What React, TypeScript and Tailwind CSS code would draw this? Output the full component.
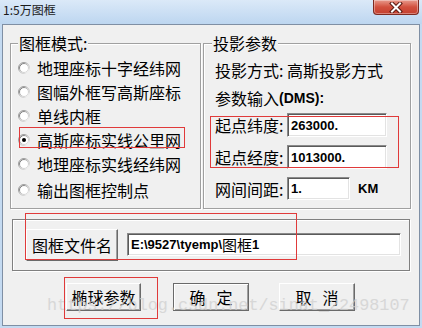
import React from "react";

const CJK = { fontFamily: '"Noto Sans CJK SC", "Noto Sans", sans-serif' };
const BOLD = { fontFamily: '"Liberation Sans", Arial, "Noto Sans CJK SC", sans-serif' };

function Radio({ checked }: { checked?: boolean }) {
  return (
    <svg width="12" height="12" viewBox="0 0 12 12" className="shrink-0">
      <defs>
        <linearGradient id="ro" x1="0" y1="0" x2="1" y2="1">
          <stop offset="0" stopColor="#8a8a8a" />
          <stop offset="0.55" stopColor="#b8b8b8" />
          <stop offset="1" stopColor="#ffffff" />
        </linearGradient>
        <linearGradient id="ri" x1="0" y1="0" x2="1" y2="1">
          <stop offset="0" stopColor="#505050" />
          <stop offset="0.5" stopColor="#c0c0c0" />
          <stop offset="1" stopColor="#e4e4e4" />
        </linearGradient>
      </defs>
      <circle cx="6" cy="6" r="5.5" fill="#fff" stroke="url(#ro)" strokeWidth="1" />
      <circle cx="6" cy="6" r="4.5" fill="#fff" stroke="url(#ri)" strokeWidth="1" />
      {checked && <circle cx="6" cy="6" r="2" fill="#000" />}
    </svg>
  );
}

function Btn({ children, def, className }: { children: React.ReactNode; def?: boolean; className?: string }) {
  return (
    <div
      className={
        "flex items-center justify-center bg-[#f0f0f0] text-[16px] leading-none text-black " +
        (def
          ? "border border-[#6a6a6a] shadow-[inset_1px_1px_0_#ffffff,inset_-1px_-1px_0_#a0a0a0] "
          : "border border-t-white border-l-white border-b-[#6a6a6a] border-r-[#6a6a6a] shadow-[inset_-1px_-1px_0_#a0a0a0] ") +
        (className ?? "")
      }
      style={CJK}
    >
      {children}
    </div>
  );
}

function Field({ value, className }: { value: string; className?: string }) {
  return (
    <div
      className={
        "flex items-center bg-white border border-t-[#8a8a8a] border-l-[#8a8a8a] border-b-white border-r-white shadow-[inset_1px_1px_0_#5a5a5a,inset_-1px_-1px_0_#e3e3e3] pl-[3px] text-[13px] font-bold leading-none text-black " +
        (className ?? "")
      }
      style={BOLD}
    >
      {value}
    </div>
  );
}

export default function App() {
  const radios = [
    "地理座标十字经纬网",
    "图幅外框写高斯座标",
    "单线内框",
    "高斯座标实线公里网",
    "地理座标实线经纬网",
    "输出图框控制点",
  ];
  return (
    <div className="relative w-[422px] h-[328px] overflow-hidden bg-[#c4daf1]" style={CJK}>
      {/* title bar */}
      <div className="flex h-[24px] items-start justify-between bg-gradient-to-b from-[#dbe9f8] to-[#bdd6f0]">
        <div className="pl-[3px] pt-[2px] text-[12px] leading-[16px] text-[#1a1a1a]">1:5万图框</div>
        <div className="mr-[3px] flex h-[15px] w-[46px] items-center justify-center rounded-b-[4px] border border-t-0 border-[#7e2a20] bg-gradient-to-b from-[#e7998c] via-[#d2503e] to-[#c4402f] shadow-[inset_0_0_0_1px_rgba(255,255,255,0.35)]">
          <svg width="14" height="11" viewBox="0 0 14 11">
            <path d="M3 1.5 L11 9.5 M11 1.5 L3 9.5" stroke="#5a1a12" strokeWidth="4" strokeLinecap="square" />
            <path d="M3 1.5 L11 9.5 M11 1.5 L3 9.5" stroke="#ffffff" strokeWidth="2" strokeLinecap="square" />
          </svg>
        </div>
      </div>

      {/* client area */}
      <div className="ml-[2px] h-[302px] w-[418px] border border-[#7f8fa4] bg-[#f0f0f0] pl-[7px] pt-[18px]">
        <div className="flex gap-[2px]">
          {/* group 1 */}
          <div className="relative h-[166px] w-[191px] border border-[#a0a0a0] shadow-[1px_1px_0_#ffffff,inset_1px_1px_0_#ffffff] pt-[12px] pl-[7px]">
            <div className="absolute left-[7px] top-[-11px] bg-[#f0f0f0] px-[1px] text-[16px] leading-[20px] text-black">图框模式:</div>
            {radios.map((r, i) => (
              <div key={r} className={"flex h-[24px] items-center gap-[7px] " + (i === 5 ? "mt-[2px]" : "")}>
                <Radio checked={i === 3} />
                <span className="text-[16px] leading-none text-black">{r}</span>
              </div>
            ))}
          </div>

          {/* group 2 */}
          <div className="relative h-[166px] w-[208px] border border-[#a0a0a0] shadow-[1px_1px_0_#ffffff,inset_1px_1px_0_#ffffff] pl-[11px] pt-[14px]">
            <div className="absolute left-[8px] top-[-11px] bg-[#f0f0f0] px-[1px] text-[16px] leading-[20px] text-black">投影参数</div>
            <div className="flex h-[24px] items-center text-[16px] leading-none text-black">投影方式: 高斯投影方式</div>
            <div className="mt-[4px] flex h-[24px] items-center text-[16px] leading-none text-black">
              参数输入<span className="text-[14px] font-bold" style={BOLD}>(DMS):</span>
            </div>
            <div className="mt-[3px] flex h-[24px] items-center">
              <span className="w-[72px] text-[16px] leading-none text-black">起点纬度:</span>
              <Field value="263000." className="h-[24px] w-[100px]" />
            </div>
            <div className="mt-[8px] flex h-[24px] items-center">
              <span className="w-[72px] text-[16px] leading-none text-black">起点经度:</span>
              <Field value="1013000." className="h-[24px] w-[100px]" />
            </div>
            <div className="mt-[8px] flex h-[23px] items-center">
              <span className="w-[72px] text-[16px] leading-none text-black">网间间距:</span>
              <Field value="1." className="h-[23px] w-[63px]" />
              <span className="ml-[8px] text-[13px] font-bold leading-none text-black" style={BOLD}>KM</span>
            </div>
          </div>
        </div>

        {/* file group */}
        <div className="ml-[2px] mt-[10px] flex h-[52px] w-[398px] items-start border border-[#808080] shadow-[1px_1px_0_#ffffff,inset_1px_1px_0_#ffffff] pl-[13px] pt-[9px]">
          <Btn className="h-[32px] w-[92px]">图框文件名</Btn>
          <div className="ml-[9px] mt-[4px]">
            <div
              className="flex h-[23px] w-[274px] items-center bg-white border border-t-[#8a8a8a] border-l-[#8a8a8a] border-b-white border-r-white shadow-[inset_1px_1px_0_#5a5a5a,inset_-1px_-1px_0_#e3e3e3] pl-[3px] text-[13px] font-bold leading-none text-black"
              style={BOLD}
            >
              E:\9527\tyemp\<span className="font-normal text-[15px]" style={CJK}>图框</span>1
            </div>
          </div>
        </div>

        {/* buttons */}
        <div className="mt-[12px] flex">
          <Btn className="ml-[56px] h-[28px] w-[75px]">椭球参数</Btn>
          <Btn def className="ml-[32px] h-[28px] w-[76px] gap-[11px]">
            <span>确</span>
            <span>定</span>
          </Btn>
          <Btn className="ml-[30px] h-[28px] w-[76px] gap-[11px]">
            <span>取</span>
            <span>消</span>
          </Btn>
        </div>
      </div>

      {/* watermark */}
      <div
        className="pointer-events-none absolute left-[47px] top-[296px] whitespace-nowrap text-[16.8px] leading-[20px] text-[#cfcfcf] opacity-75"
        style={{ fontFamily: '"Liberation Mono", "Courier New", monospace' }}
      >
        https://blog.csdn.net/sinat_22498107
      </div>

      {/* red annotation rectangles */}
      <div className="pointer-events-none absolute left-[19px] top-[127px] h-[21px] w-[166px] border border-[#e03a3a]" />
      <div className="pointer-events-none absolute left-[210px] top-[116px] h-[52px] w-[189px] border border-[#e03a3a]" />
      <div className="pointer-events-none absolute left-[25px] top-[213px] h-[47px] w-[272px] border border-[#e03a3a]" />
      <div className="pointer-events-none absolute left-[64px] top-[277px] h-[42px] w-[94px] border border-[#e03a3a]" />
    </div>
  );
}
